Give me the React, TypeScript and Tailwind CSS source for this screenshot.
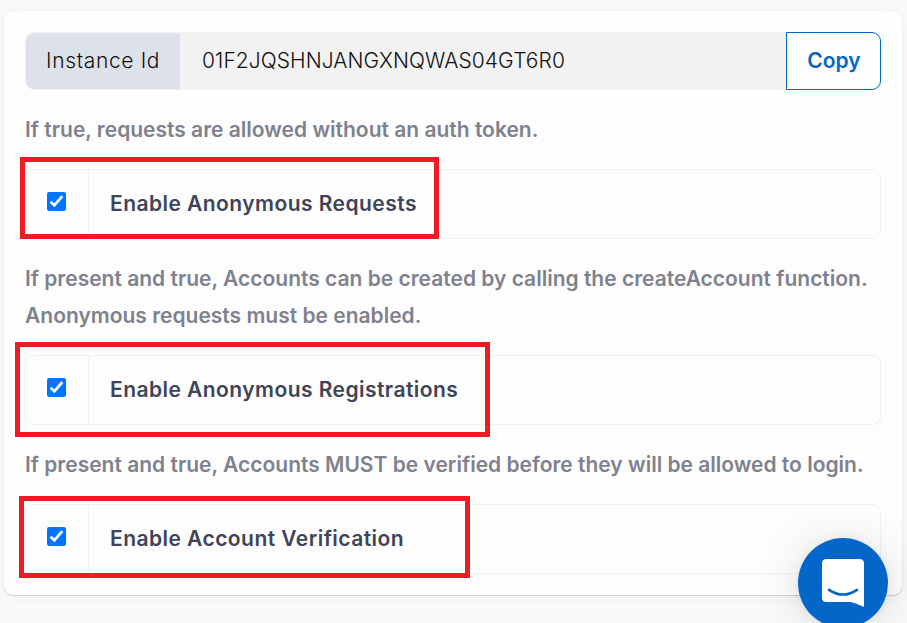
import React from "react";

function Row({ label }: { label: string }) {
  return (
    <div className="flex h-[70px] rounded-lg border border-[#f1f1f3]">
      <div className="flex w-[63px] items-start border-r border-[#f1f1f3] pl-[21px] pt-[22px]">
        <svg width="19" height="19" viewBox="0 0 19 19">
          <rect width="19" height="19" rx="2.2" fill="#0075ff" />
          <path d="M3.6 9.7 7.4 13.3 15.3 4.1" fill="none" stroke="white" strokeWidth="2.8" />
        </svg>
      </div>
      <div className="flex items-center whitespace-nowrap pl-[21px] text-[21px] font-semibold tracking-[0.45px] text-[#3f4458]">{label}</div>
    </div>
  );
}

export default function App() {
  return (
    <div className="relative h-[623px] w-[907px] overflow-hidden bg-[#fafafb] pl-1 pt-[11px] font-['Inter',sans-serif]">
      <div className="h-[584px] w-[898px] rounded-[9px] bg-[#fdfdfd] px-[21px] pt-[21px] shadow-[0_1px_1px_#c9cfdd,0_0_2px_#e9ebf1,0_2px_14px_rgba(60,66,87,0.05)]">
        <div className="flex h-[58px] w-[856px] text-[21px] font-light">
          <div className="flex w-[155px] items-center rounded-l-[9px] border border-r-0 border-[#f0f1f3] bg-[#dde2ea] bg-clip-padding pl-5 tracking-[0.65px] text-[#111]">Instance Id</div>
          <div className="flex flex-1 items-center bg-[#f2f2f2] pl-[22px] tracking-[0.07px] text-[#111]">01F2JQSHNJANGXNQWAS04GT6R0</div>
          <div className="flex w-[95px] items-center justify-center rounded-r-[9px] border border-[#0566c9] bg-[#fdfdfd] pl-px font-semibold text-[#0566c9]">Copy</div>
        </div>
        <p className="h-[79px] pt-[21px] text-[21px] font-semibold leading-[37px] text-[#7f828e]">If true, requests are allowed without an auth token.</p>
        <Row label="Enable Anonymous Requests" />
        <p className="h-[116px] whitespace-nowrap pt-[21px] text-[21px] font-semibold leading-[37px] text-[#7f828e]">If present and true, Accounts can be created by calling the createAccount function.<br />Anonymous requests must be enabled.</p>
        <Row label="Enable Anonymous Registrations" />
        <p className="h-[79px] whitespace-nowrap pt-[21px] text-[21px] font-semibold leading-[37px] text-[#7f828e]">If present and true, Accounts MUST be verified before they will be allowed to login.</p>
        <Row label="Enable Account Verification" />
      </div>
      <div className="absolute left-5 top-[157px] h-[82px] w-[419px] border-[5px] border-[#ed1c24]" />
      <div className="absolute left-[15px] top-[342px] h-[95px] w-[475px] border-[5px] border-[#ed1c24]" />
      <div className="absolute left-[19px] top-[496px] h-[82px] w-[451px] border-[5px] border-[#ed1c24]" />
      <div className="absolute left-[798px] top-[538px] h-[90px] w-[90px] rounded-full bg-[#0566c9] shadow-[0_2px_10px_rgba(0,0,0,0.06),0_3px_48px_rgba(0,0,0,0.13)]">
        <svg width="90" height="90" viewBox="0 0 90 90">
          <path d="M28.5 21H61.5Q66 21 66 25.5V69Q60 66 53 64H28.5Q24 64 24 59.5V25.5Q24 21 28.5 21Z" fill="white" />
          <path d="M31 51.8Q45 61.2 59 51.8" fill="none" stroke="#0566c9" strokeWidth="2.6" strokeLinecap="round" />
        </svg>
      </div>
    </div>
  );
}
